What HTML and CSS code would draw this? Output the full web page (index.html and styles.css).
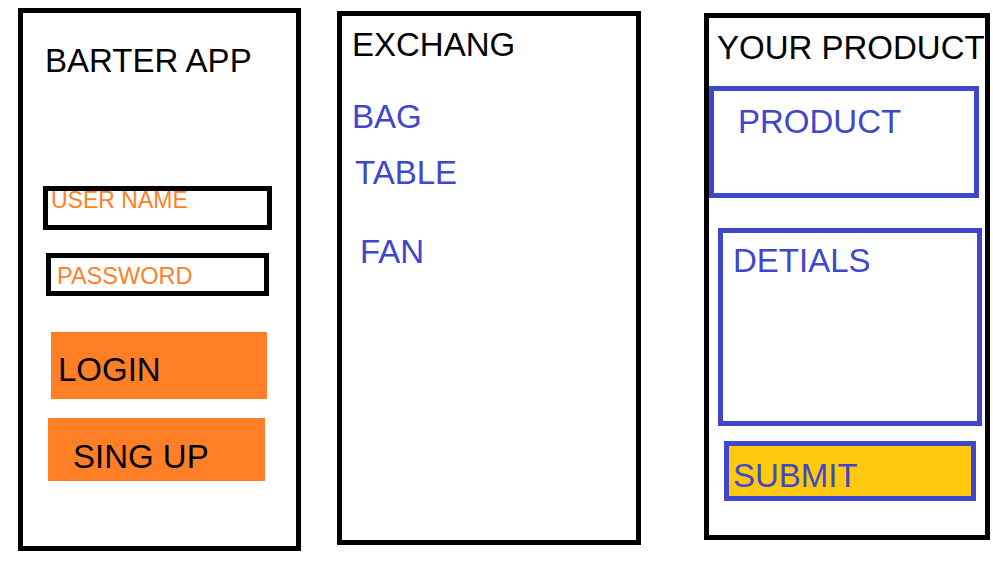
FILE: index.html
```html
<!DOCTYPE html>
<html lang="en">
<head>
  <meta charset="UTF-8">
  <meta name="viewport" content="width=device-width, initial-scale=1.0">
  <title>Barter App</title>
  <link rel="stylesheet" href="styles.css">
</head>
<body>

<div class="screen" id="loginScreen">
  <div class="app-title">BARTER APP</div>
  <div class="field" id="userName">USER NAME</div>
  <div class="field" id="password">PASSWORD</div>
  <div class="btn-orange" id="loginBtn">LOGIN</div>
  <div class="btn-orange" id="signupBtn">SING UP</div>
</div>

<div class="screen" id="exchangeScreen">
  <div class="screen-title">EXCHANG</div>
  <div class="item" id="itemBag">BAG</div>
  <div class="item" id="itemTable">TABLE</div>
  <div class="item" id="itemFan">FAN</div>
</div>

<div class="screen" id="productScreen">
  <div class="screen-title">YOUR PRODUCT</div>
  <div class="blue-box" id="productBox">PRODUCT</div>
  <div class="blue-box" id="detailsBox">DETIALS</div>
  <div class="blue-box" id="submitBtn">SUBMIT</div>
</div>

</body>
</html>
```

FILE: styles.css
```css
* {
  box-sizing: border-box;
}

body {
  font-family: "Liberation Sans", Arial, sans-serif;
  margin: 0;
  padding: 0;
  display: flex;
  align-items: flex-start;
  background-color: #fff;
  color: #000;
}

.screen {
  border: 5px solid #000;
  background-color: #fff;
}

/* first screen: login */
#loginScreen {
  width: 283px;
  height: 543px;
  margin: 8px 0 0 18px;
}

.app-title {
  font-size: 33px;
  line-height: 33px;
  margin: 31px 0 0 22px;
}

.field {
  border: 5px solid #000;
  color: #ff7f27;
}

#userName {
  width: 229px;
  height: 44px;
  margin: 109px 0 0 20px;
  padding: 0 0 0 3px;
  font-size: 23px;
  line-height: 18px;
}

#password {
  width: 223px;
  height: 43px;
  margin: 23px 0 0 23px;
  padding: 6px 0 0 6px;
  font-size: 23.5px;
  line-height: 24px;
}

.btn-orange {
  background-color: #ff7f27;
  font-size: 33px;
  line-height: 33px;
}

#loginBtn {
  width: 216px;
  height: 67px;
  margin: 36px 0 0 28px;
  padding: 21px 0 0 7px;
}

#signupBtn {
  width: 217px;
  height: 63px;
  margin: 19px 0 0 25px;
  padding: 22px 0 0 25px;
}

/* second screen: exchange list */
#exchangeScreen {
  width: 304px;
  height: 534px;
  margin: 11px 0 0 36px;
}

.screen-title {
  font-size: 33px;
  line-height: 33px;
  white-space: nowrap;
}

#exchangeScreen .screen-title {
  margin: 12px 0 0 10px;
}

.item {
  color: #3f48cc;
  font-size: 33px;
  line-height: 33px;
}

#itemBag {
  margin: 39px 0 0 10px;
}

#itemTable {
  margin: 23px 0 0 13px;
}

#itemFan {
  margin: 46px 0 0 18px;
}

/* third screen: add product */
#productScreen {
  width: 286px;
  height: 527px;
  margin: 13px 0 0 63px;
}

#productScreen .screen-title {
  margin: 13px 0 0 8px;
}

.blue-box {
  border: 5px solid #3f48cc;
  color: #3f48cc;
  font-size: 33px;
  line-height: 33px;
}

#productBox {
  width: 270px;
  height: 112px;
  margin: 22px 0 0 0;
  padding: 14px 0 0 24px;
}

#detailsBox {
  width: 264px;
  height: 198px;
  margin: 30px 0 0 9px;
  padding: 11px 0 0 10px;
}

#submitBtn {
  width: 252px;
  height: 60px;
  margin: 15px 0 0 15px;
  padding: 13px 0 0 4px;
  background-color: #ffc90e;
}
```
